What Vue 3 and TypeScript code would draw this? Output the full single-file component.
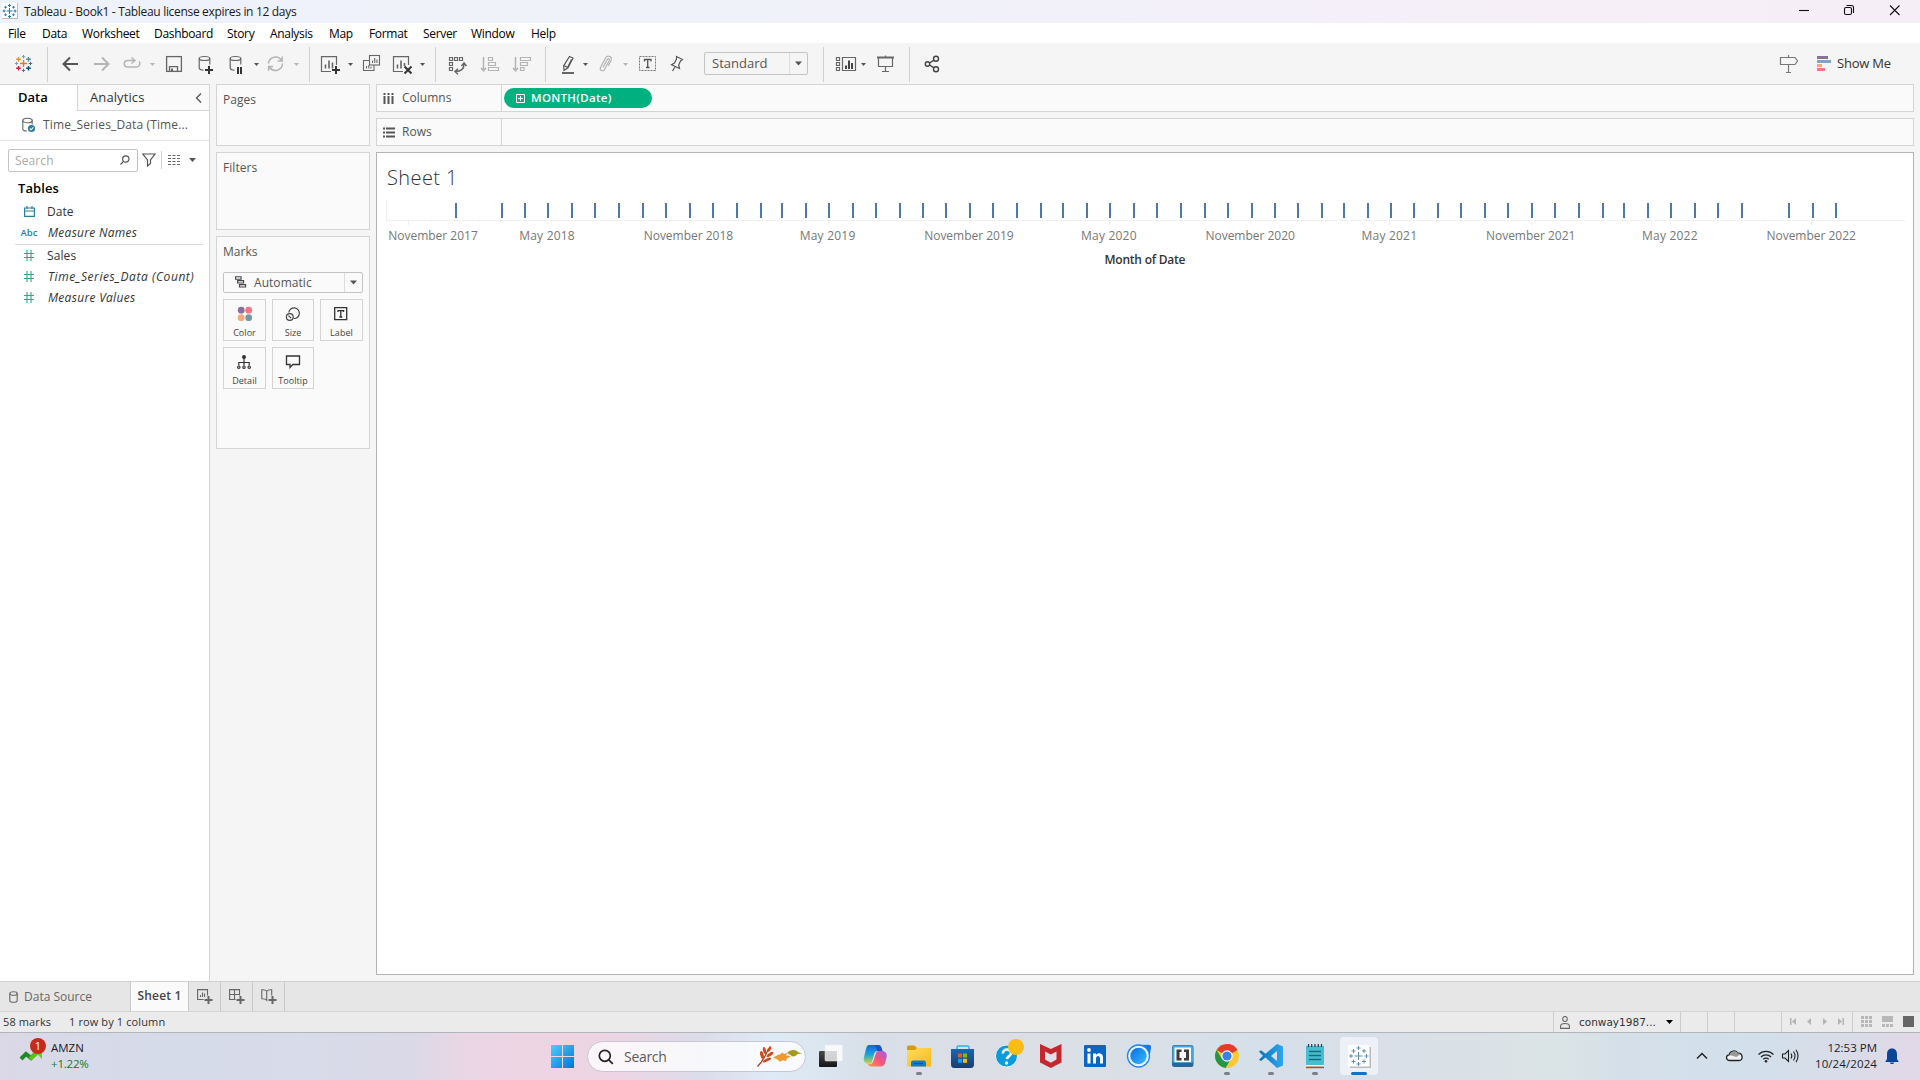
<script setup lang="ts">
interface Field { name: string; kind: 'date' | 'abc' | 'num'; italic?: boolean; ls: number }

const menus: { t: string; w: number }[] = [
  { t: 'File', w: 34 }, { t: 'Data', w: 40 }, { t: 'Worksheet', w: 72 }, { t: 'Dashboard', w: 73 },
  { t: 'Story', w: 43 }, { t: 'Analysis', w: 59 }, { t: 'Map', w: 40 }, { t: 'Format', w: 54 },
  { t: 'Server', w: 48 }, { t: 'Window', w: 60 }, { t: 'Help', w: 40 },
]

const dimensions: Field[] = [
  { name: 'Date', kind: 'date', ls: 0 },
  { name: 'Measure Names', kind: 'abc', italic: true, ls: 0.28 },
]
const measures: Field[] = [
  { name: 'Sales', kind: 'num', ls: 0.1 },
  { name: 'Time_Series_Data (Count)', kind: 'num', italic: true, ls: 0.56 },
  { name: 'Measure Values', kind: 'num', italic: true, ls: 0.3 },
]

const DAY = 86400000
const origin = Date.UTC(2017, 10, 1)
const pxPerDay = 0.7685
const dateX = (y: number, m: number): number => 408.5 + ((Date.UTC(y, m, 1) - origin) / DAY) * pxPerDay

const marks: number[] = []
for (let i = 0; i < 60; i++) {
  if (i === 1 || i === 56) continue
  marks.push(Math.round(dateX(2018, i) + 0.8))
}
const ticks: { x: number; major: boolean }[] = []
for (let i = 0; i < 65; i++) ticks.push({ x: Math.floor(dateX(2017, 10 + i)), major: i % 6 === 0 })

const axisLabels: { t: string; x: number; w: number }[] = []
for (let i = 0; i <= 10; i++) {
  const nov = i % 2 === 0
  const year = 2017 + Math.floor((i + 1) / 2)
  axisLabels.push({
    t: (nov ? 'November ' : 'May ') + year,
    x: i === 0 ? 433 : dateX(2017, 10 + i * 6) - 0.6,
    w: nov ? 89.5 : 55.5,
  })
}

const taskDots = [919, 1227, 1271, 1315]
const gridCells = [0, 1, 2, 3, 4, 5, 6, 7, 8]
</script>

<template>
  <div class="desktop">
    <header class="titlebar">
      <svg class="appicon" width="24" height="23" viewBox="0 0 24 23">
        <rect x="2" y="3" width="16" height="16" fill="#b9bcc2" />
        <rect x="2" y="3" width="15" height="15" fill="#fff" />
        <g stroke="#2b7bab" stroke-width="1.1" fill="none">
          <path d="M9.5 8v6M6.500 11h6M9.500 4v3M8 5.500h3M9.500 15v3M8 16.500h3M4 9.500v3M2.500 11h3M15 9.500v3M13.500 11h3M5.500 6v2.500M4.200 7.200h2.600M13.500 6v2.500M12.200 7.200h2.600M5.500 13.500v2.500M4.200 14.800h2.600M13.500 13.500v2.500M12.200 14.800h2.600" />
        </g>
      </svg>
      <span class="apptitle">Tableau - Book1 - Tableau license expires in 12 days</span>
      <span class="grow"></span>
      <svg width="130" height="23" viewBox="1790 0 130 23" fill="none" stroke="#111" stroke-width="1.1">
        <path d="M1799 10.500h10" />
        <rect x="1844.500" y="7.500" width="7" height="7" rx="1.500" />
        <path d="M1846.500 5.500h5a2 2 0 0 1 2 2v5.500" />
        <path d="M1890 5.500l9.500 9.500M1899.500 5.500l-9.500 9.500" />
      </svg>
    </header>

    <nav class="menubar">
      <span v-for="m in menus" :key="m.t" class="menu" :style="{ width: m.w + 'px' }">{{ m.t }}</span>
    </nav>

    <div class="toolbar">
      <svg width="47" height="41" viewBox="0 43 47 41" fill="none" stroke-width="1.400">
        <path d="M23.500 60v7M20 63.500h7" stroke="#e8762c" />
        <path d="M18.500 57v4.600M16.200 59.300h4.600" stroke="#eb912c" />
        <path d="M28.500 57v4.600M26.200 59.300h4.600" stroke="#59879b" />
        <path d="M18.500 66v4.600M16.200 68.300h4.600" stroke="#c72037" />
        <path d="M28.500 66v4.600M26.200 68.300h4.600" stroke="#1f447e" />
        <path d="M23.500 55v3.400M21.800 56.700h3.400" stroke="#7199a6" stroke-width="1" />
        <path d="M23.500 68.700v3.400M21.800 70.400h3.400" stroke="#5b6591" stroke-width="1" />
        <path d="M16.500 61.800v3.400M14.800 63.500h3.400" stroke="#7b9db0" stroke-width="1" />
        <path d="M30.500 61.800v3.400M28.800 63.500h3.400" stroke="#5b6591" stroke-width="1" />
      </svg>
      <i class="sep"></i>
      <svg width="38" height="41" viewBox="48 43 38 41" fill="none" stroke="#555" stroke-width="2"><path d="M78 64H63.500M70 57.500L63.500 64l6.500 6.500" /></svg>
      <svg width="30" height="41" viewBox="86 43 30 41" fill="none" stroke="#b4b4b4" stroke-width="2"><path d="M94 64h14.500M102 57.500l6.500 6.500-6.500 6.500" /></svg>
      <svg width="44" height="41" viewBox="116 43 44 41" fill="none" stroke="#b4b4b4" stroke-width="1.500">
        <path d="M134 60.500h-7a3.300 3.300 0 0 0 0 6.500h10a3.300 3.300 0 0 0 2-5.500M131.500 57.500l3.500 3-3.500 3" />
        <path d="M150 63h5l-2.500 3z" fill="#b4b4b4" stroke="none" />
      </svg>
      <svg width="30" height="41" viewBox="160 43 30 41" fill="none" stroke="#666" stroke-width="1.300">
        <rect x="166.600" y="56.600" width="14.800" height="14.800" />
        <path d="M169.500 71.400v-4.800h8v4.800" /><rect x="171" y="68.500" width="2" height="3" fill="#666" stroke="none" />
      </svg>
      <svg width="30" height="41" viewBox="190 43 30 41" fill="none" stroke="#666" stroke-width="1.200">
        <ellipse cx="204.500" cy="58.500" rx="5.300" ry="2" /><path d="M199.200 58.500v9.500c0 1.300 1.500 2 4.300 2.200M209.800 58.500v6" />
        <path d="M209 66v8M205 70h8" stroke="#333" stroke-width="2" />
      </svg>
      <svg width="42" height="41" viewBox="220 43 42 41" fill="none" stroke="#666" stroke-width="1.200">
        <ellipse cx="235.500" cy="58.500" rx="5.300" ry="2" /><path d="M230.200 58.500v9.500c0 1.300 1.500 2 4.300 2.200M240.800 58.500v6" />
        <path d="M238 67v7M241 67v7" stroke="#333" stroke-width="2" />
        <path d="M254 63h5l-2.500 3z" fill="#555" stroke="none" />
      </svg>
      <svg width="47" height="41" viewBox="262 43 47 41" fill="none" stroke="#b4b4b4" stroke-width="1.500">
        <path d="M268.500 63.500a7 7 0 0 1 13-3M282.500 63.500a7 7 0 0 1-13 3.500M282.200 56.500v4.500h-4.500M268.600 70.800v-4.300h4.400" />
        <path d="M294 63h5l-2.500 3z" fill="#b4b4b4" stroke="none" />
      </svg>
      <i class="sep"></i>
      <svg width="47" height="41" viewBox="310 43 47 41" fill="none" stroke="#666" stroke-width="1.200">
        <path d="M336.500 65v-8.400h-15v14.900h9.500" /><path d="M325.500 68.500v-4M329 68.500v-8M332.500 68.500v-6" stroke-width="1.600" />
        <path d="M336 66v8M332 70h8" stroke="#333" stroke-width="2" />
        <path d="M348 63h5l-2.500 3z" fill="#555" stroke="none" />
      </svg>
      <svg width="29" height="41" viewBox="357 43 29 41" fill="none" stroke="#666" stroke-width="1.100">
        <rect x="369.500" y="55.500" width="10" height="9.500" /><path d="M369 60.500h-5.500v10h10.500V65" />
        <path d="M372.500 63v-2.500M374.700 63v-5M377 63v-3.500M366.500 68.500v-2.500M368.800 68.500v-3.500M371 68.500v-1.800" />
      </svg>
      <svg width="49" height="41" viewBox="386 43 49 41" fill="none" stroke="#666" stroke-width="1.200">
        <path d="M408.500 65v-8.400h-15v14.900h9.500" /><path d="M397.500 68.500v-4M401 68.500v-8M404.500 66v-3" stroke-width="1.600" />
        <path d="M404.500 66.500l7 7M411.500 66.500l-7 7" stroke="#333" stroke-width="2" />
        <path d="M420 63h5l-2.500 3z" fill="#555" stroke="none" />
      </svg>
      <i class="sep"></i>
      <svg width="38" height="41" viewBox="436 43 38 41" fill="none" stroke="#666" stroke-width="1.200">
        <path d="M449.500 57.500h3v3h-3zM454.500 57.500h3v3h-3zM459.500 57.500h3v3h-3zM449.500 62.500h3v3h-3zM449.500 67.500h3v3h-3z" />
        <path d="M464 64c0 5-3.500 7.500-8.500 7.500M461.500 66l2.500-3 2.500 3M458 68.800l-3 2.700 3 2.700" stroke-width="1.500" />
      </svg>
      <svg width="32" height="41" viewBox="474 43 32 41" fill="none" stroke="#b4b4b4" stroke-width="1.200">
        <path d="M483.500 57v13M481 68l2.500 2.800 2.500-2.800" stroke-width="1.500" /><path d="M488.500 57.500h4v3h-4zM488.500 62.500h7v3h-7zM488.500 67.500h10v3h-10z" />
      </svg>
      <svg width="39" height="41" viewBox="506 43 39 41" fill="none" stroke="#b4b4b4" stroke-width="1.200">
        <path d="M515.500 57v13M513 68l2.500 2.800 2.500-2.800" stroke-width="1.500" /><path d="M520.500 57.500h10v3h-10zM520.500 62.500h7v3h-7zM520.500 67.500h3.500v3h-3.500z" />
      </svg>
      <i class="sep"></i>
      <svg width="46" height="41" viewBox="546 43 46 41" fill="none" stroke="#555" stroke-width="1.200">
        <path d="M569.500 56.500l3.500 1.500-5 9.800-4 2.700-.3-4.800zM563.800 65.500l4.200 2.200M571.500 59.500l-4 8" />
        <path d="M562 73h12" stroke-width="2" stroke="#666" /><path d="M583 63h5l-2.500 3z" fill="#555" stroke="none" />
      </svg>
      <svg width="40" height="41" viewBox="592 43 40 41" fill="none" stroke="#b4b4b4" stroke-width="1.200">
        <path d="M603 67.500l4.300-8c.8-1.500 2.600-.5 2 1l-4.800 9c-1.300 2.500-5.300 1-4-2l5-9.500c1.500-3 6.500-2 5.800 1.500-.2 1-2 4.500-3 6.500" />
        <path d="M623 63h5l-2.500 3z" fill="#b4b4b4" stroke="none" />
      </svg>
      <svg width="31" height="41" viewBox="632 43 31 41" fill="none" stroke="#777" stroke-width="1">
        <rect x="639.500" y="56.500" width="16" height="14" stroke-dasharray="2 1" />
        <path d="M644.500 61.500v-2h6.500v2M647.700 59.500v8M646 67.500h3.500" stroke="#555" stroke-width="1.300" />
      </svg>
      <svg width="41" height="41" viewBox="663 43 41 41" fill="none" stroke="#555" stroke-width="1.200">
        <path d="M676.500 56.500l6 3-2 1.500-1.800 4 .8 3.500-8-3.800 3-1.700 2-4zM675 67l-2.500 4" />
      </svg>
      <div class="fit"><span>Standard</span><b><svg width="7" height="5" viewBox="0 0 7 5"><path d="M0 .5h7L3.500 4.500z" fill="#555" /></svg></b></div>
      <i class="sep fitsep"></i>
      <svg width="46" height="41" viewBox="824 43 46 41" fill="none" stroke="#666" stroke-width="1.200">
        <path d="M836.500 57.500h3v3h-3zM836.500 62.500h3v3h-3zM836.500 67.500h3v3h-3zM842.500 57.500h13v13h-13z" />
        <path d="M846 69v-3.500M849 69v-8.500M852 69v-6" stroke="#444" stroke-width="2" /><path d="M861 63h5l-2.500 3z" fill="#555" stroke="none" />
      </svg>
      <svg width="39" height="41" viewBox="870 43 39 41" fill="none" stroke="#666" stroke-width="1.200">
        <path d="M877 57.500h17" stroke-width="2" /><path d="M878.500 58v8.500h14V58M885.500 67v5M882 71.500h7M885.500 55.500v2" />
      </svg>
      <i class="sep"></i>
      <svg width="40" height="41" viewBox="910 43 40 41" fill="none" stroke="#444" stroke-width="1.400">
        <circle cx="927.500" cy="64" r="2.200" /><circle cx="936" cy="58.800" r="2.500" /><circle cx="936" cy="69.200" r="2.500" /><path d="M929.500 63l4.200-2.700M929.500 65l4.200 2.700" />
      </svg>
      <span class="grow"></span>
      <svg width="30" height="41" viewBox="1774 43 30 41" fill="none" stroke="#777" stroke-width="1.200">
        <path d="M1780.500 57.500h14.500l2.500 3.500-2.500 3.500h-14.500zM1788.500 55v2.500M1788.500 64.500v7.500M1786 72.500h5" />
      </svg>
      <svg width="33" height="41" viewBox="1804 43 33 41">
        <path d="M1817 56h11v3h-11z" fill="#8a7199" /><path d="M1817 60h14v3h-14z" fill="#80a5cb" /><path d="M1817 64h5v3h-5z" fill="#f5a87b" /><path d="M1817 68h8v3h-8z" fill="#fb7282" />
      </svg>
      <span class="showme">Show Me</span>
    </div>

    <main class="work">
      <aside class="datapane">
        <div class="ptabs">
          <div class="ptab on">Data</div>
          <div class="ptab off"><span>Analytics</span>
            <svg width="8" height="12" viewBox="0 0 8 12" fill="none" stroke="#555" stroke-width="1.300"><path d="M6 1.500L1.500 6 6 10.500" /></svg>
          </div>
        </div>
        <div class="source">
          <svg width="14" height="17" viewBox="0 0 14 17" fill="none" stroke="#666" stroke-width="1.100">
            <ellipse cx="5.500" cy="3.500" rx="4.700" ry="2.300" /><path d="M.8 3.500v8.500c0 1.200 1.800 2 4 2M10.200 3.500v4" />
            <circle cx="9.500" cy="11.500" r="3.600" fill="#2a7fa0" stroke="none" /><path d="M7.800 11.500l1.300 1.300 2.300-2.500" stroke="#fff" />
          </svg>
          <span>Time_Series_Data (Time...</span>
        </div>
        <div class="finder">
          <div class="searchbox"><span>Search</span>
            <svg width="10" height="10" viewBox="0 0 10 10" fill="none" stroke="#555" stroke-width="1.200"><circle cx="5.800" cy="4" r="3.200" /><path d="M3.500 6.300L.5 9.500" /></svg>
          </div>
          <svg class="funnel" width="14" height="14" viewBox="0 0 14 14" fill="none" stroke="#555" stroke-width="1.200"><path d="M.8 1h12.200L8.500 7v3.500L5.500 13V7z" /></svg>
          <i></i>
          <svg class="listico" width="12" height="10" viewBox="0 0 12 10" stroke="#666" stroke-width="1.100" stroke-dasharray="3 1.500"><path d="M0 .5h12M0 3.500h12M0 6.500h12M0 9.500h12" /></svg>
          <svg width="7" height="4" viewBox="0 0 7 4"><path d="M0 0h7L3.500 4z" fill="#555" /></svg>
        </div>
        <h2>Tables</h2>
        <ul>
          <li v-for="f in dimensions" :key="f.name" :class="{ it: f.italic }">
            <em v-if="f.kind === 'abc'">Abc</em>
            <em v-else><svg width="11" height="11" viewBox="0 0 11 11" fill="none" stroke="#2a7fa0" stroke-width="1.200"><path d="M.6 2h9.800v8.400H.6zM.6 5h9.800M3 0v3M8 0v3" /></svg></em>
            <span :style="{ letterSpacing: f.ls + 'px' }">{{ f.name }}</span>
          </li>
        </ul>
        <hr />
        <ul>
          <li v-for="f in measures" :key="f.name" :class="{ it: f.italic }">
            <em><svg width="10" height="11" viewBox="0 0 10 11" fill="none" stroke="#3fa286" stroke-width="1.100"><path d="M3 0v11M7 0v11M0 3.500h10M0 7.500h10" /></svg></em>
            <span :style="{ letterSpacing: f.ls + 'px' }">{{ f.name }}</span>
          </li>
        </ul>
      </aside>

      <section class="cards">
        <div class="card pages">Pages</div>
        <div class="card filters">Filters</div>
        <div class="card marks">Marks
          <div class="marktype">
            <svg width="12" height="12" viewBox="0 0 12 12" fill="none" stroke="#444" stroke-width="1.100"><path d="M.6.8h5.500v2.400H.6zM2.600 4.600h6v2.400h-6zM4.600 8.600h6v2.400h-6z" /></svg>
            <span>Automatic</span>
            <b><svg width="7" height="5" viewBox="0 0 7 5"><path d="M0 .5h7L3.500 4.500z" fill="#555" /></svg></b>
          </div>
          <div class="shelfbtns">
            <div><svg width="16" height="16" viewBox="0 0 16 16"><circle cx="4.200" cy="4.200" r="3.400" fill="#8a7199" /><circle cx="11.700" cy="4.200" r="3.400" fill="#fb7282" /><circle cx="4.200" cy="11.700" r="3.400" fill="#f5a87b" /><circle cx="11.700" cy="11.700" r="3.400" fill="#7699a5" /></svg><span>Color</span></div>
            <div><svg width="16" height="16" viewBox="0 0 16 16" fill="none" stroke="#444" stroke-width="1.200"><path d="M3.800 6.500a5.300 5.300 0 1 1 5 6" /><circle cx="4.800" cy="11" r="3.400" /><path d="M3.500 9.600l2.600 2.600" /></svg><span>Size</span></div>
            <div><svg width="16" height="16" viewBox="1 0 16 16" fill="none" stroke="#333" stroke-width="1.300"><path d="M1.700 1.700h12v12h-12zM5 6V4.600h5.600V6M7.800 4.600v6.600M6.300 11h3" /></svg><span>Label</span></div>
            <div><svg width="16" height="16" viewBox="1 0 16 16" fill="none" stroke="#333" stroke-width="1.200"><circle cx="8" cy="3" r="2" fill="#333" stroke="none" /><path d="M8 4v7.500M2.800 11.500V8.500h10.400v3" /><circle cx="2.800" cy="13.200" r="1.200" /><circle cx="8" cy="13.200" r="1.200" /><circle cx="13.200" cy="13.200" r="1.200" /></svg><span>Detail</span></div>
            <div><svg width="16" height="16" viewBox="0 0 16 16" fill="none" stroke="#333" stroke-width="1.300"><path d="M1.500 2h13v8.500H8l-3 3v-3H1.500z" /></svg><span>Tooltip</span></div>
          </div>
        </div>
      </section>

      <section class="viewcol">
        <div class="shelf">
          <div class="shelfname"><svg width="12" height="13" viewBox="0 0 12 13" stroke="#555" stroke-width="2"><path d="M1.500 4v8M5.500 4v8M9.500 4v8" /><path d="M1.500 1v2M5.500 1v2M9.500 1v2" /></svg><span>Columns</span></div>
          <div class="pill"><svg width="9" height="9" viewBox="0 0 9 9" fill="none" stroke="#fff"><path d="M.5.500h8v8h-8zM2 4.500h5M4.500 2v5" /></svg><span>MONTH(Date)</span></div>
        </div>
        <div class="shelf rows">
          <div class="shelfname"><svg width="12" height="13" viewBox="0 0 12 13" stroke="#555" stroke-width="2"><path d="M3 2.500h9M3 6.500h9M3 10.500h9" /><path d="M0 2.500h2M0 6.500h2M0 10.500h2" /></svg><span>Rows</span></div>
        </div>
        <div class="sheet">
          <h1>Sheet 1</h1>
          <svg class="viz" width="1536" height="80" viewBox="377 196 1536 80">
            <g fill="#f0f0f0">
              <rect x="386" y="200" width="1" height="20" />
              <rect x="386" y="220" width="1518" height="1" />
              <rect v-for="(t, i) in ticks" :key="i" :x="t.x" y="221" width="1" :height="t.major ? 4 : 1" />
            </g>
            <rect v-for="m in marks" :key="m" :x="m - 1" y="203" width="2" height="15" fill="#4e79a7" />
            <text v-for="l in axisLabels" :key="l.t" :x="l.x" y="240" :textLength="l.w" text-anchor="middle" class="axlab">{{ l.t }}</text>
            <text x="1145" y="264" textLength="81" text-anchor="middle" class="axtitle">Month of Date</text>
          </svg>
        </div>
      </section>
    </main>

    <div class="tabs">
      <div class="tab ds"><svg width="9" height="12" viewBox="0 0 9 12" fill="none" stroke="#666" stroke-width="1.100"><ellipse cx="4.500" cy="2.500" rx="3.700" ry="1.800" /><path d="M.8 2.500v7c0 2.400 7.400 2.400 7.400 0v-7" /></svg><span>Data Source</span></div>
      <div class="tab cur">Sheet 1</div>
      <div class="tab add"><svg width="16" height="15" viewBox="0 0 16 15" fill="none" stroke="#666" stroke-width="1.100"><path d="M10.500 6.500V.6H.6v9.900h6M3.500 8V6M5.500 8V3.500M7.500 8V4.500" /><path d="M11.500 7v8M7.500 11h8" stroke-width="2" /></svg></div>
      <div class="tab add"><svg width="16" height="15" viewBox="0 0 16 15" fill="none" stroke="#666" stroke-width="1.100"><path d="M10.500 6.500V.6H.6v9.900h6M5.500.6v9.900M.6 5.500h9.900" /><path d="M11.500 7v8M7.500 11h8" stroke-width="2" /></svg></div>
      <div class="tab add"><svg width="16" height="15" viewBox="0 0 16 15" fill="none" stroke="#666" stroke-width="1.100"><path d="M10.700 6.500V.8C8 .6 6.500 1.200 5.700 2.200 5 1.200 3.500.6.800.8v8.900c2.700 0 4.200.5 4.900 1.500V2.200" /><path d="M11.500 7v8M7.500 11h8" stroke-width="2" /></svg></div>
    </div>

    <div class="status">
      <span class="s1">58 marks</span><span class="s2">1 row by 1 column</span>
      <span class="grow"></span>
      <div class="user"><svg width="10" height="13" viewBox="0 0 10 13" fill="none" stroke="#666" stroke-width="1.100"><ellipse cx="5" cy="3" rx="2.300" ry="2.500" /><path d="M.6 12.400V10c0-2 1.500-2.500 4.400-2.500s4.400.5 4.400 2.500v2.400z" /></svg><span>conway1987...</span><svg width="7" height="4" viewBox="0 0 7 4"><path d="M0 0h7L3.500 4z" fill="#000" /></svg></div>
      <div class="c27"></div><div class="c27"></div><div class="c47"></div>
      <div class="c71"><svg width="70" height="20" viewBox="1782 1012 70 20" fill="#b4b4b4"><path d="M1790 1018h1.500v7h-1.500zM1796 1018v7l-4-3.500zM1811 1018v7l-4-3.500zM1823 1018v7l4-3.500zM1838 1018v7l4-3.500zM1842.500 1018h1.500v7h-1.500z" /></svg></div>
      <div class="c67"><svg width="67" height="20" viewBox="1853 1012 67 20" fill="#b8b8b8">
        <rect v-for="c in gridCells" :key="c" :x="1861 + (c % 3) * 4" :y="1016 + Math.floor(c / 3) * 4" width="3" height="3" />
        <path d="M1882 1016h11v6h-11zM1882 1024h3v3h-3zM1886 1024h3v3h-3zM1890 1024h3v3h-3z" /><path d="M1903 1016h11v11h-11z" fill="#666" />
      </svg></div>
    </div>

    <footer class="taskbar">
      <svg width="50" height="47" viewBox="0 1033 50 47">
        <path d="M21 1059l5-5 5 4 5-5" fill="none" stroke="#1e8a22" stroke-width="4" /><path d="M30 1059l9-8" fill="none" stroke="#5cc40e" stroke-width="4" /><path d="M35 1052h7v7z" fill="#6ccf12" />
        <circle cx="38" cy="1046" r="8" fill="#c42b1c" /><text x="38" y="1050" text-anchor="middle" class="badge">1</text>
      </svg>
      <div class="stock"><span>AMZN</span><span class="up">+1.22%</span></div>
      <span class="lead"></span>
      <svg width="43" height="47" viewBox="544 1033 43 47">
        <defs><linearGradient id="win" x1="0" y1="0" x2="1" y2="1"><stop offset="0" stop-color="#4cd0fb" /><stop offset="1" stop-color="#0573d4" /></linearGradient></defs>
        <path d="M551 1045h11v11h-11zM563 1045h11v11h-11zM551 1057h11v11h-11zM563 1057h11v11h-11z" fill="url(#win)" />
      </svg>
      <div class="tsearch">
        <svg width="16" height="16" viewBox="0 0 16 16" fill="none" stroke="#222" stroke-width="1.700"><circle cx="6.800" cy="6.800" r="5.500" /><path d="M10.800 10.800l4 4" /></svg>
        <span>Search</span>
        <svg width="46" height="22" viewBox="756 1045 46 22">
          <path d="M757.500 1065.500c5-5 8-10 11-18" fill="none" stroke="#a83a18" stroke-width="1.200" />
          <g fill="#cf4a1c"><ellipse cx="762" cy="1054" rx="1.700" ry="4" transform="rotate(-15 762 1054)" /><ellipse cx="764.500" cy="1049.500" rx="1.500" ry="3.500" transform="rotate(-10 764.500 1049.500)" /><ellipse cx="769.500" cy="1048" rx="1.400" ry="3" transform="rotate(25 769.500 1048)" /><ellipse cx="770" cy="1053.500" rx="1.500" ry="4" transform="rotate(55 770 1053.500)" /><ellipse cx="767" cy="1059" rx="1.500" ry="4.500" transform="rotate(65 767 1059)" /></g>
          <path d="M773 1056.500c3-1 4-3 7-3l2-2 2 1.500 3-1-1 2.500 5 .5-4 2.500-1 2.500-3-.8-3.500 1.500-1.500-2z" fill="#f09a2c" />
          <path d="M787 1052c3-3.500 8-4 11-1l4 1.500-4.500.5c-2 3-5.500 3-7 1z" fill="#a39a1c" />
        </svg>
      </div>
      <svg class="apps" width="574" height="47" viewBox="806 1033 574 47">
        <defs>
          <linearGradient id="dark" x1="0" y1="0" x2="0" y2="1"><stop offset="0" stop-color="#484848" /><stop offset="1" stop-color="#161616" /></linearGradient>
          <linearGradient id="cpa" x1="0" y1="0" x2="0" y2="1"><stop offset="0" stop-color="#1c62e0" /><stop offset=".5" stop-color="#16a7d8" /><stop offset="1" stop-color="#d8d53a" /></linearGradient>
          <linearGradient id="cpb" x1="1" y1="0" x2="0" y2="1"><stop offset="0" stop-color="#a25df0" /><stop offset=".5" stop-color="#f2567c" /><stop offset="1" stop-color="#ff9c48" /></linearGradient>
          <linearGradient id="fold" x1="0" y1="0" x2="1" y2="1"><stop offset="0" stop-color="#ffdc5e" /><stop offset="1" stop-color="#f9b81a" /></linearGradient>
          <linearGradient id="store" x1="0" y1="0" x2="0" y2="1"><stop offset="0" stop-color="#1668b4" /><stop offset="1" stop-color="#1b3c6c" /></linearGradient>
          <linearGradient id="vs" x1="0" y1="0" x2="1" y2="0"><stop offset="0" stop-color="#0b72b8" /><stop offset="1" stop-color="#2ba8f0" /></linearGradient>
          <linearGradient id="ring" x1="0" y1="0" x2="1" y2="1"><stop offset="0" stop-color="#0b6be8" /><stop offset="1" stop-color="#37bdf8" /></linearGradient>
        </defs>
        <rect x="819" y="1051" width="18" height="16" rx="1" fill="url(#dark)" />
        <rect x="825" y="1045" width="17.500" height="16" rx="1" fill="#fff" fill-opacity=".78" stroke="#eee" stroke-width=".5" />
        <path d="M869 1045h9c2 0 3 1 3.500 3l1 3h-5c-2 0-2.700 1-3.200 2.500l-2.300 8c-.5 1.500-1.500 2.500-3 2.500-4 0-6-3-5-7l2-8c.7-2.500 1.500-4 3-4z" fill="url(#cpa)" />
        <path d="M881.500 1051c4 0 6 2.500 5 7l-1.500 5c-.8 2.500-2 3.500-4.500 3.500H871c-1.500 0-2.500-1-3-2.500 3 .5 4.500-.5 5.200-2.500l2.800-8.500c.5-1.500 1.500-2 3-2z" fill="url(#cpb)" />
        <path d="M873 1045h5c2 0 3 1 3.500 3l1 3h-5c-1-2.500-1.500-5-4.500-6z" fill="#1a54c8" />
        <path d="M907 1047a1.500 1.500 0 0 1 1.500-1.500h6l2.500 2.500h12.500a1.500 1.500 0 0 1 1.500 1.500V1052h-24z" fill="#d99a0a" />
        <path d="M907 1050h8l2-2h14v18.500h-24z" fill="url(#fold)" /><path d="M911 1066.500v-4a2 2 0 0 1 2-2h11a2 2 0 0 1 2 2v4z" fill="#1279cf" /><path d="M914 1063.500h9" stroke="#0a559a" stroke-width="1.200" />
        <path d="M957 1050v-2.500a1.500 1.500 0 0 1 1.500-1.500h9a1.500 1.500 0 0 1 1.500 1.500v2.500" fill="none" stroke="#22b8ee" stroke-width="1.500" />
        <path d="M951 1049h23v15.500a3.500 3.500 0 0 1-3.500 3.500h-16a3.500 3.500 0 0 1-3.500-3.500z" fill="url(#store)" />
        <path d="M958 1053.500h4v4h-4z" fill="#f35325" /><path d="M963 1053.500h4v4h-4z" fill="#81bc06" /><path d="M958 1058.800h4v4h-4z" fill="#05a6f0" /><path d="M963 1058.800h4v4h-4z" fill="#ffba08" />
        <circle cx="1006.500" cy="1056" r="11" fill="#0b9bdc" stroke="#e9f6fc" stroke-width="1" /><path d="M1002.800 1053.500c0-5.500 8.400-5 8.200-.3-.1 2.800-3.800 3-4.200 6" fill="none" stroke="#fff" stroke-width="2.600" /><circle cx="1006.500" cy="1063" r="1.700" fill="#fff" /><circle cx="1016" cy="1047" r="8" fill="#fdbc0f" />
        <path d="M1040 1044l10.800 5 10.700-5v18.500l-10.700 5.500-10.800-5.500z" fill="#c3282d" /><path d="M1045 1051.500l5.800 3 5.700-3v8l-5.700 3.200-5.800-3.200z" fill="#dfe0e8" />
        <rect x="1084" y="1045" width="22" height="22" rx="1.200" fill="#0a66c2" /><path d="M1087.500 1053.500h3v10h-3zM1093 1053.500h3v1.500c1.500-2.500 7-2.500 7 2.500v6h-3v-5c0-3.500-4-3.500-4 0v5h-3z" fill="#fff" /><circle cx="1089" cy="1050" r="1.900" fill="#fff" />
        <path d="M1138 1045l10.500-.3c2 0 2.700 1 2.500 3l-1.500 9z" fill="#1275e8" /><circle cx="1138.500" cy="1056" r="11" fill="#eef6ff" stroke="#1b86f4" stroke-width="1.300" /><circle cx="1138.500" cy="1056" r="8.200" fill="url(#ring)" />
        <rect x="1172" y="1045" width="21.500" height="22" rx="2.500" fill="#25699c" /><rect x="1172.500" y="1045.500" width="20.500" height="17.500" rx="2" fill="#4aa6d6" /><rect x="1174.500" y="1047.500" width="16.500" height="14.500" fill="#f4f6f7" /><path d="M1181.500 1049.500h-5v11h5v-2.500h-2v-6h2zM1184 1049.500h5v11h-5v-2.500h2v-6h-2z" fill="#3c3c3c" />
        <circle cx="1227" cy="1056" r="12" fill="#fcc934" /><path d="M1227 1056l-10.400-6a12 12 0 0 1 20.800 0z" fill="#e33b2e" /><path d="M1227 1044a12 12 0 0 1 10.400 6H1227z" fill="#e33b2e" /><path d="M1216.600 1050a12 12 0 0 0 9 17.900l5.500-9.500-9.300 0z" fill="#23964a" /><circle cx="1227" cy="1056" r="5.700" fill="#fff" /><circle cx="1227" cy="1056" r="4.600" fill="#3c7fee" />
        <path d="M1277 1044l6 2.500v19l-6 2.500-11.500-10.500-4.500 3.500-2-1.200 4-4-4-4 2-1.500 4.500 3.500zM1277 1051l-6 5 6 5z" fill="url(#vs)" fill-rule="evenodd" />
        <rect x="1306" y="1046" width="18" height="19" fill="#45bfcf" /><path d="M1306 1065h18v2.200h-18z" fill="#fff" /><path d="M1306 1066.500h18v1.700h-18z" fill="#a5521c" /><path d="M1309 1051.500h12M1309 1055.500h12M1309 1059.500h12" stroke="#156c7c" stroke-width="1.300" /><path d="M1308.500 1044v3M1311.700 1044v3M1315 1044v3M1318.300 1044v3M1321.500 1044v3" stroke="#235" stroke-width="1.200" />
        <rect x="1340" y="1037" width="38" height="38" rx="4" fill="#f1f4f9" fill-opacity=".85" />
        <rect x="1350" y="1047" width="21" height="21" fill="#bbb" /><rect x="1348" y="1045" width="21.500" height="21.500" fill="#fff" />
        <path d="M1358.500 1052v8M1354.500 1056h8M1358.500 1046v4M1356.500 1048h4M1358.500 1062v4M1356.500 1064h4M1351 1054v4M1349 1056h4M1366.500 1054v4M1364.500 1056h4M1353.500 1049v4M1351.500 1051h4M1364 1049v4M1362 1051h4M1353.500 1059.500v4M1351.500 1061.500h4M1364 1059.500v4M1362 1061.500h4" stroke="#5f8fb4" stroke-width="1" fill="none" />
        <rect v-for="d in taskDots" :key="d" :x="d - 3" y="1072" width="6" height="3" rx="1.500" fill="#7c7f86" />
        <rect x="1351" y="1072" width="16" height="3" rx="1.500" fill="#0874d1" />
      </svg>
      <span class="grow"></span>
      <svg width="115" height="47" viewBox="1690 1033 115 47" fill="none" stroke="#222" stroke-width="1.300">
        <path d="M1697 1058.500l5-5 5 5" stroke-width="1.500" />
        <path d="M1730 1060.500c-4.500 0-4.500-5.500-.8-5.700 1-4.500 7-5 8.600-1.600 5-.5 6 7.300 1.200 7.300z" fill="#f2f2f2" /><path d="M1729.500 1055c1-4.500 7-5 8.500-1.500l2.500.5-4 3z" fill="#999" stroke="none" />
        <path d="M1758.500 1054.500a10.500 10.500 0 0 1 15 0M1761 1057a7 7 0 0 1 10 0M1763.300 1059.300a3.800 3.800 0 0 1 5.400 0" /><circle cx="1766" cy="1061.200" r="1.300" fill="#222" stroke="none" />
        <path d="M1782.500 1054h2.500l3.500-3.500v11l-3.500-3.500h-2.500zM1791 1053.500q1.700 2.500 0 5M1793.500 1051.500q3 4.500 0 9M1796 1049.800q4 6.200 0 12.400" stroke-width="1.100" />
      </svg>
      <div class="clock"><span>12:53 PM</span><span>10/24/2024</span></div>
      <svg width="43" height="47" viewBox="1877 1033 43 47"><path d="M1892 1048.500c-3.500 0-5 2.500-5 6v4.500l-1.800 3h13.600l-1.800-3v-4.500c0-3.500-1.500-6-5-6zM1889.800 1062.500h4.400c-.5 2-3.900 2-4.400 0z" fill="#0b4596" /></svg>
    </footer>
  </div>
</template>

<style>
body { margin: 0; overflow: hidden; }
</style>

<style scoped>
.desktop { width: 1920px; height: 1080px; display: flex; flex-direction: column; background: #f5f5f5; font-family: "Open Sans", "Noto Sans", sans-serif; font-size: 12px; color: #555; overflow: hidden; }
.desktop svg { display: block; flex: none; }
.grow { flex: 1; }
.titlebar { height: 23px; flex: none; display: flex; align-items: center; background: linear-gradient(90deg, #eef2fa 0, #f0f1f9 45%, #f5eff8 75%, #f6eef7 100%); color: #1a1a1a; }
.apptitle { letter-spacing: -.32px; line-height: 23px; }
.menubar { height: 20px; flex: none; background: #fff; display: flex; padding-left: 8px; color: #000; line-height: 21px; letter-spacing: -.32px; }
.menu { white-space: nowrap; }
.toolbar { height: 41px; flex: none; display: flex; }
.sep { width: 1px; height: 35px; margin-top: 4px; background: #d0d0d0; flex: none; }
.fit { box-sizing: border-box; width: 104px; height: 23px; margin-top: 9px; border: 1px solid #c4c4c4; border-radius: 2px; display: flex; align-items: center; font-size: 13px; padding-left: 7px; }
.fit span { flex: 1; padding-bottom: 2px; }
.fit b { width: 17px; height: 21px; border-left: 1px solid #ddd; display: flex; align-items: center; justify-content: center; }
.fitsep { margin-left: 15px; }
.showme { width: 83px; line-height: 41px; font-size: 13px; color: #333; letter-spacing: -.2px; }
.work { flex: none; height: 897px; display: flex; }
.datapane { box-sizing: border-box; width: 210px; border-right: 1px solid #d4d4d4; border-top: 1px solid #d4d4d4; background: #fff; display: flex; flex-direction: column; }
.ptabs { display: flex; height: 26px; flex: none; font-size: 13px; line-height: 25px; }
.ptab.on { width: 77px; color: #000; font-weight: 600; text-indent: 18px; }
.ptab.off { flex: 1; display: flex; align-items: center; background: #fafafa; border-left: 1px solid #d4d4d4; border-bottom: 1px solid #d4d4d4; padding-left: 12px; color: #333; letter-spacing: .1px; }
.ptab.off span { flex: 1; }
.ptab.off svg { margin-right: 6px; }
.source { box-sizing: border-box; height: 30px; flex: none; border-bottom: 1px solid #e2e2e2; display: flex; align-items: center; padding-left: 22px; letter-spacing: .14px; }
.source span { margin-left: 7px; padding-bottom: 2px; }
.finder { display: flex; align-items: center; height: 22px; margin: 8px 0 0 8px; }
.searchbox { box-sizing: border-box; width: 130px; height: 23px; border: 1px solid #c4c4c4; border-radius: 2px; display: flex; align-items: center; padding: 0 7px 0 6px; color: #aaa; letter-spacing: .1px; }
.searchbox span { flex: 1; }
.funnel { margin-left: 4px; }
.finder i { width: 1px; height: 18px; background: #d0d0d0; margin: 0 6px 0 5px; }
.listico { margin-right: 9px; }
h2 { margin: 7px 0 0 18px; font-size: 13px; line-height: 20px; font-weight: 600; color: #000; letter-spacing: .1px; }
ul { list-style: none; margin: 0; padding: 0; }
h2 + ul { padding-top: 3px; }
li { display: flex; align-items: center; height: 21px; color: #333; white-space: nowrap; }
li em { width: 58px; margin-right: -11px; display: flex; justify-content: center; font-style: normal; font-weight: 600; font-size: 9.500px; color: #2a7fa0; }
li.it span { font-style: italic; padding-left: 1px; }
hr { width: 188px; height: 1px; margin: 1px 0 0 15px; border: 0; background: #dcdcdc; flex: none; }
.cards { width: 155px; margin-left: 6px; display: flex; flex-direction: column; gap: 6px; }
.card { box-sizing: border-box; width: 154px; border: 1px solid #d4d4d4; background: #fafafa; padding: 6px 6px 0; line-height: 18px; letter-spacing: .05px; }
.pages { height: 62px; }
.filters { height: 78px; }
.marks { height: 213px; }
.marktype { box-sizing: border-box; height: 21px; margin-top: 11px; border: 1px solid #c4c4c4; border-radius: 2px; display: flex; align-items: center; padding-left: 11px; }
.marktype svg { margin-top: -2px; }
.marktype span { flex: 1; margin-left: 7px; }
.marktype b { width: 17px; height: 19px; border-left: 1px solid #ddd; display: flex; align-items: center; justify-content: center; }
.marktype b svg { margin: 0; }
.shelfbtns { display: grid; grid-template-columns: 43px 42px 43px; gap: 6px; margin-top: 6px; }
.shelfbtns div { box-sizing: border-box; height: 42px; border: 1px solid #d4d4d4; display: flex; flex-direction: column; align-items: center; padding-top: 6px; font-size: 9px; line-height: 12px; color: #444; }
.shelfbtns span { margin-top: 5px; }
.viewcol { margin-left: 5px; width: 1538px; display: flex; flex-direction: column; }
.shelf { box-sizing: border-box; height: 28px; border: 1px solid #d4d4d4; background: #fafafa; display: flex; }
.rows { margin-top: 6px; }
.shelfname { width: 125px; border-right: 1px solid #d4d4d4; display: flex; align-items: center; padding-left: 6px; box-sizing: border-box; }
.shelfname span { margin-left: 7px; padding-bottom: 2px; }
.pill { width: 148px; height: 20px; border-radius: 10px; background: #00b180; color: #fff; display: flex; align-items: center; margin: 3px 0 0 2px; font-weight: 600; font-size: 11.500px; letter-spacing: .3px; box-sizing: border-box; padding-left: 12px; }
.pill span { margin-left: 6px; padding-bottom: 2px; }
.sheet { box-sizing: border-box; height: 823px; margin-top: 6px; border: 1px solid #b4b4b4; background: #fff; }
h1 { margin: 0; padding: 11px 0 0 10px; height: 32px; line-height: 28px; font-size: 20px; font-weight: 300; color: #333; letter-spacing: .4px; }
.axlab { font-size: 12px; fill: #777; }
.axtitle { font-size: 12px; fill: #333; font-weight: 600; }
.tabs { box-sizing: border-box; height: 30px; flex: none; background: #e6e6e6; border-top: 1px solid #d0d0d0; display: flex; }
.tab { box-sizing: border-box; border-right: 1px solid #c8c8c8; display: flex; align-items: center; }
.ds { width: 131px; padding-left: 9px; color: #666; font-size: 12px; }
.ds span { margin-left: 6px; }
.cur { width: 58px; background: #fafafa; justify-content: center; font-weight: 600; font-size: 12px; color: #444; letter-spacing: .15px; padding-bottom: 2px; }
.add { width: 32px; justify-content: center; padding-left: 1px; }
.status { box-sizing: border-box; height: 22px; flex: none; background: #ebebeb; border-top: 1px solid #d4d4d4; border-bottom: 1px solid #b2b5ba; display: flex; color: #333; font-size: 11px; letter-spacing: .12px; line-height: 20px; }
.s1 { width: 66px; padding-left: 3px; }
.status > div { box-sizing: border-box; border-left: 1px solid #ccc; }
.user { width: 127px; display: flex; align-items: center; padding-left: 6px; font-family: "DejaVu Sans", sans-serif; font-size: 10.500px; letter-spacing: 0; }
.user span { margin: 0 11px 0 9px; width: 76px; }
.c27 { width: 27px; } .c47 { width: 47px; } .c71 { width: 71px; } .c67 { width: 68px; }
.taskbar { height: 48px; flex: none; display: flex; background: linear-gradient(90deg, #dbd8e7 0, #d8dae8 70px, #d5dbe9 160px, #d8dbe9 300px, #dad9e8 410px, #e9d6e4 460px, #efd4e3 550px, #ecd5e4 620px, #dcdcea 700px, #deeaf5 770px, #dce6f0 820px, #d8dfe9 870px, #dddee5 1000px, #dadfe6 1110px, #d6e0ea 1240px, #d8dfe8 1380px, #dbe4e5 1560px, #d5dfe9 1620px, #d2e0eb 1740px, #d7dde9 1830px, #e2d8e7 1920px); color: #1c1c1c; }
.badge { font-size: 11px; fill: #fff; }
.stock { display: flex; flex-direction: column; width: 49px; padding: 7px 0 0 1px; line-height: 16px; font-size: 11.500px; }
.up { color: #0f7b1f; letter-spacing: -.2px; }
.lead { width: 444px; }
.tsearch { box-sizing: border-box; width: 219px; height: 31px; margin-top: 8px; border: 1px solid #c9c6d4; border-radius: 16px; background: rgba(255, 255, 255, .78); display: flex; align-items: center; padding-left: 10px; font-size: 14px; color: #5b5b60; }
.tsearch span { flex: 1; margin-left: 10px; padding-bottom: 1px; letter-spacing: -.3px; }
.tsearch svg:last-child { margin-right: 3px; }
.clock { width: 72px; display: flex; flex-direction: column; align-items: flex-end; padding-top: 7px; line-height: 16px; font-size: 11.500px; }
.clock span:last-child { letter-spacing: .1px; }
</style>
